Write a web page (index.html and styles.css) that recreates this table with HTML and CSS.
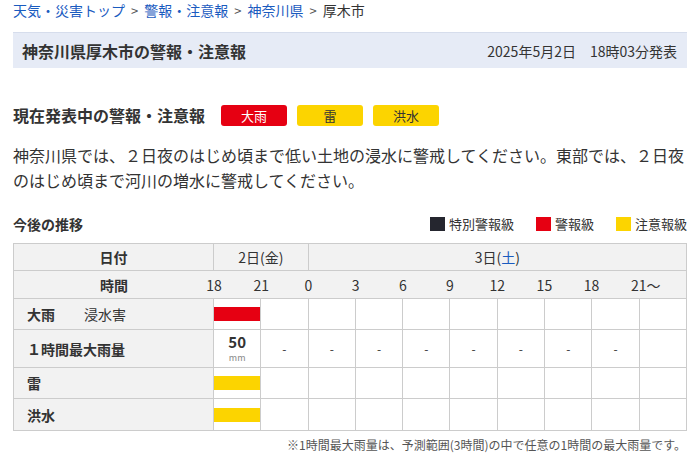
FILE: index.html
```html
<!DOCTYPE html>
<html lang="ja">
<head>
<meta charset="utf-8">
<link rel="stylesheet" href="styles.css">
</head>
<body>
<div class="page">
  <nav class="crumbs">
    <a href="#">天気・災害トップ</a><span class="sep">&gt;</span><a href="#">警報・注意報</a><span class="sep">&gt;</span><a href="#">神奈川県</a><span class="sep">&gt;</span><span class="cur">厚木市</span>
  </nav>

  <header class="titlebar">
    <h1>神奈川県厚木市の警報・注意報</h1>
    <div class="date">2025年5月2日　18時03分発表</div>
  </header>

  <section class="current">
    <h2>現在発表中の警報・注意報</h2>
    <div class="badges">
      <span class="badge red">大雨</span>
      <span class="badge yellow">雷</span>
      <span class="badge yellow">洪水</span>
    </div>
  </section>

  <p class="message">神奈川県では、２日夜のはじめ頃まで低い土地の浸水に警戒してください。東部では、２日夜のはじめ頃まで河川の増水に警戒してください。</p>

  <div class="trend-head">
    <h3>今後の推移</h3>
    <ul class="legend">
      <li><span class="sq dark"></span>特別警報級</li>
      <li><span class="sq red"></span>警報級</li>
      <li><span class="sq yellow"></span>注意報級</li>
    </ul>
  </div>

  <table class="trend">
    <colgroup>
      <col class="c-head">
      <col><col><col><col><col><col><col><col><col><col>
    </colgroup>
    <tr class="r-date">
      <th class="lab">日付</th>
      <td colspan="2">2日(金)</td>
      <td colspan="8">3日(<span class="sat">土</span>)</td>
    </tr>
    <tr class="r-time">
      <th class="lab noright">時間</th>
      <td colspan="10" class="times">
        <div class="tgrid">
          <span><b>18</b></span><span><b>21</b></span><span><b>0</b></span><span><b>3</b></span><span><b>6</b></span><span><b>9</b></span><span><b>12</b></span><span><b>15</b></span><span><b>18</b></span><span><b>21<i>〜</i></b></span>
        </div>
      </td>
    </tr>
    <tr class="r-bar">
      <th class="item"><strong>大雨</strong><span class="sub">浸水害</span></th>
      <td><div class="bar red"></div></td>
      <td></td><td></td><td></td><td></td><td></td><td></td><td></td><td></td><td></td>
    </tr>
    <tr class="r-rain">
      <th class="item"><strong>１時間最大雨量</strong></th>
      <td class="amt"><span class="num">50</span><span class="unit">mm</span></td>
      <td class="dash">-</td><td class="dash">-</td><td class="dash">-</td><td class="dash">-</td><td class="dash">-</td><td class="dash">-</td><td class="dash">-</td><td class="dash">-</td><td></td>
    </tr>
    <tr class="r-bar">
      <th class="item"><strong>雷</strong></th>
      <td><div class="bar yellow"></div></td>
      <td></td><td></td><td></td><td></td><td></td><td></td><td></td><td></td><td></td>
    </tr>
    <tr class="r-bar r-last">
      <th class="item"><strong>洪水</strong></th>
      <td><div class="bar yellow"></div></td>
      <td></td><td></td><td></td><td></td><td></td><td></td><td></td><td></td><td></td>
    </tr>
  </table>

  <p class="note">※1時間最大雨量は、予測範囲(3時間)の中で任意の1時間の最大雨量です。</p>
</div>
</body>
</html>
```

FILE: styles.css
```css
* { box-sizing: border-box; }
html, body { margin: 0; padding: 0; background: #fff; }
body {
  font-family: "Noto Sans CJK JP", "Noto Sans", sans-serif;
  color: #333;
  font-size: 14px;
}
.page { width: 674px; margin-left: 13px; }

.crumbs { height: 21px; line-height: 21px; font-size: 14px; white-space: nowrap; }
.crumbs a { color: #1a5bbf; text-decoration: none; }
.crumbs .sep { color: #555; margin: 0 6px; font-size: 13px; }
.crumbs .cur { color: #333; }

.titlebar {
  margin-top: 11px;
  height: 36px;
  background: #e6ebf6;
  border-top: 1px solid #d6ddec;
  display: flex;
  align-items: center;
  justify-content: space-between;
  padding: 0 10px 0 9px;
}
.titlebar h1 { margin: 0; font-size: 16px; font-weight: bold; line-height: 20px; color: #333; }
.titlebar .date { font-size: 14px; line-height: 18px; color: #333; }

.current { margin-top: 36px; display: flex; align-items: center; height: 22px; }
.current h2 { margin: 0; font-size: 16px; font-weight: bold; line-height: 22px; }
.badges { display: flex; gap: 10px; margin-left: 16px; }
.badge {
  width: 66px; height: 21px; line-height: 21px; text-align: center;
  font-size: 13px; border-radius: 3px;
}
.badge.red { background: #e60012; color: #fff; }
.badge.yellow { background: #fcd400; color: #333; }

.message { margin: 17px 0 0; font-size: 16px; line-height: 25px; color: #333; letter-spacing: 0; }

.trend-head { margin-top: 21px; display: flex; justify-content: space-between; align-items: center; height: 20px; }
.trend-head h3 { margin: 0; font-size: 14px; font-weight: bold; line-height: 20px; }
.legend { list-style: none; margin: 0; padding: 0; display: flex; font-size: 13px; line-height: 20px; }
.legend li { display: flex; align-items: center; margin-left: 22px; }
.legend .sq { width: 15px; height: 14px; margin-right: 4px; display: inline-block; }
.sq.dark { background: #25262f; }
.sq.red { background: #e60012; }
.sq.yellow { background: #fcd400; }

.trend {
  margin-top: 9px;
  width: 674px;
  table-layout: fixed;
  border-collapse: separate;
  border-spacing: 0;
  border-top: 1px solid #ccc;
  border-left: 1px solid #ccc;
  font-size: 14px;
}
.trend col.c-head { width: 200px; }
.trend th, .trend td {
  border-right: 1px solid #ccc;
  border-bottom: 1px solid #ccc;
  padding: 0;
  text-align: center;
  vertical-align: middle;
  font-weight: normal;
}
.trend th { background: #f2f2f2; }
.trend .lab { font-weight: bold; }
.trend .noright { border-right: none; }
.r-date td { background: #f2f2f2; }
.r-date { height: 27px; }
.r-time { height: 28px; }
.r-bar { height: 31px; }
.r-last { height: 32px; }
.r-rain { height: 38px; }
.sat { color: #1a5bbf; }

.times { background: #f2f2f2; }
.tgrid { display: grid; grid-template-columns: repeat(10, 1fr); text-align: left; }
.tgrid span { display: block; }
.tgrid b { font-weight: normal; display: inline-block; position: relative; transform: translateX(-50%); }
.tgrid i { font-style: normal; position: absolute; left: 100%; top: 0; }

.trend th.item { text-align: left; padding-left: 13px; }
.item strong { font-weight: bold; }
.item .sub { margin-left: 29px; font-weight: normal; }

.bar { height: 14px; width: 100%; }
.bar.red { background: #e60012; }
.bar.yellow { background: #fcd400; }

.amt { line-height: 1; }
.amt .num { display: block; font-weight: bold; font-size: 15px; line-height: 16px; }
.amt .unit { display: block; font-size: 9px; color: #888; line-height: 12px; margin-top: 2px; }
.dash { font-size: 12px; }

.note { margin: 5px 1px 0 0; text-align: right; font-size: 12px; line-height: 18px; color: #555; }
```
